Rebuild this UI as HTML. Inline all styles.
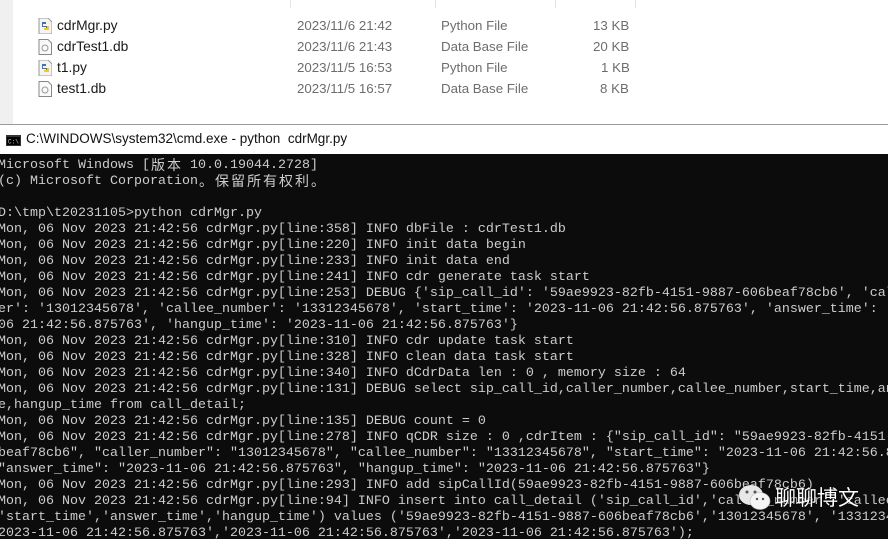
<!DOCTYPE html>
<html><head><meta charset="utf-8"><style>
*{margin:0;padding:0;box-sizing:border-box}
body{width:888px;height:539px;overflow:hidden;background:#fff;position:relative;font-family:"Liberation Sans","Noto Sans CJK SC",sans-serif}
.strip{position:absolute;left:0;top:0;width:13px;height:124px;background:#f0f0f0}
.sep{position:absolute;top:0;width:1px;height:8px;background:#e5e5e5}
.row{position:absolute;left:0;height:20px;font-size:13.8px;color:#1a1a1a;line-height:20px}
.row span{position:absolute;white-space:nowrap}
.g{color:#6d6d6d;font-size:13.3px}
.ic{position:absolute;left:38px;top:2px;width:14px;height:16px}
.title{position:absolute;left:0;top:124px;width:888px;height:30px;border-top:1px solid #9a9a9a;background:#fff}
.title .t{position:absolute;left:26px;top:6px;font-size:13.5px;color:#111}
.con{position:absolute;left:0;top:154px;width:888px;height:385px;background:#0c0c0c;overflow:hidden}
pre{position:absolute;left:-2px;top:4px;font-family:"Liberation Mono","Noto Sans CJK SC",monospace;font-size:13.33px;line-height:16px;color:#cccccc;white-space:pre}
.c{display:inline-block;width:16px;height:16px;line-height:14px;vertical-align:top;overflow:hidden;font-family:"Noto Sans CJK SC",sans-serif;font-size:14px;text-align:center}
.wm{position:absolute;left:775px;top:482px;font-size:21px;color:#fff;font-family:"Noto Sans CJK SC",sans-serif;text-shadow:0 0 2px #000}
</style></head><body>
<div class="strip"></div>
<div class="sep" style="left:290px"></div><div class="sep" style="left:435px"></div><div class="sep" style="left:555px"></div><div class="sep" style="left:635px"></div>

<div class="row" style="top:16px;width:640px">
<svg class="ic" viewBox="0 0 14 16"><path d="M1 0h9l4 4v12H1z" fill="#f4f4f4" stroke="#999"/><path d="M4 4h4v2H5v2h5v3H8V9H4z" fill="#3b74b0"/><path d="M10 12H6v-2h3V8h2v4z" fill="#f3c928"/></svg>
<span style="left:57px">cdrMgr.py</span><span class="g" style="left:297px">2023/11/6 21:42</span><span class="g" style="left:441px">Python File</span><span class="g" style="left:593px">13 KB</span></div>
<div class="row" style="top:37px;width:640px">
<svg class="ic" viewBox="0 0 14 16"><path d="M1 .5h9l3.5 3.5v11.5H1z" fill="#fafafa" stroke="#888"/><circle cx="7" cy="9" r="3" fill="none" stroke="#999"/></svg>
<span style="left:57px">cdrTest1.db</span><span class="g" style="left:297px">2023/11/6 21:43</span><span class="g" style="left:441px">Data Base File</span><span class="g" style="left:593px">20 KB</span></div>
<div class="row" style="top:58px;width:640px">
<svg class="ic" viewBox="0 0 14 16"><path d="M1 0h9l4 4v12H1z" fill="#f4f4f4" stroke="#999"/><path d="M4 4h4v2H5v2h5v3H8V9H4z" fill="#3b74b0"/><path d="M10 12H6v-2h3V8h2v4z" fill="#f3c928"/></svg>
<span style="left:57px">t1.py</span><span class="g" style="left:297px">2023/11/5 16:53</span><span class="g" style="left:441px">Python File</span><span class="g" style="left:601px">1 KB</span></div>
<div class="row" style="top:79px;width:640px">
<svg class="ic" viewBox="0 0 14 16"><path d="M1 .5h9l3.5 3.5v11.5H1z" fill="#fafafa" stroke="#888"/><circle cx="7" cy="9" r="3" fill="none" stroke="#999"/></svg>
<span style="left:57px">test1.db</span><span class="g" style="left:297px">2023/11/5 16:57</span><span class="g" style="left:441px">Data Base File</span><span class="g" style="left:600px">8 KB</span></div>

<div class="title">
<svg style="position:absolute;left:6px;top:10px" width="15" height="11" viewBox="0 0 15 11"><rect width="15" height="11" fill="#333"/><rect x="1" y="2" width="13" height="8" fill="#000"/><text x="2" y="8.5" font-size="6" fill="#ccc" font-family="Liberation Mono">C:\</text></svg>
<div class="t">C:\WINDOWS\system32\cmd.exe - python&nbsp; cdrMgr.py</div></div>

<div class="con"><pre>Microsoft Windows [<span class="c">版</span><span class="c">本</span> 10.0.19044.2728]
(c) Microsoft Corporation<span class="c">。</span><span class="c">保</span><span class="c">留</span><span class="c">所</span><span class="c">有</span><span class="c">权</span><span class="c">利</span><span class="c">。</span>

D:\tmp\t20231105>python cdrMgr.py
Mon, 06 Nov 2023 21:42:56 cdrMgr.py[line:358] INFO dbFile : cdrTest1.db
Mon, 06 Nov 2023 21:42:56 cdrMgr.py[line:220] INFO init data begin
Mon, 06 Nov 2023 21:42:56 cdrMgr.py[line:233] INFO init data end
Mon, 06 Nov 2023 21:42:56 cdrMgr.py[line:241] INFO cdr generate task start
Mon, 06 Nov 2023 21:42:56 cdrMgr.py[line:253] DEBUG {'sip_call_id': '59ae9923-82fb-4151-9887-606beaf78cb6', 'cal
er': '13012345678', 'callee_number': '13312345678', 'start_time': '2023-11-06 21:42:56.875763', 'answer_time': '
06 21:42:56.875763', 'hangup_time': '2023-11-06 21:42:56.875763'}
Mon, 06 Nov 2023 21:42:56 cdrMgr.py[line:310] INFO cdr update task start
Mon, 06 Nov 2023 21:42:56 cdrMgr.py[line:328] INFO clean data task start
Mon, 06 Nov 2023 21:42:56 cdrMgr.py[line:340] INFO dCdrData len : 0 , memory size : 64
Mon, 06 Nov 2023 21:42:56 cdrMgr.py[line:131] DEBUG select sip_call_id,caller_number,callee_number,start_time,an
e,hangup_time from call_detail;
Mon, 06 Nov 2023 21:42:56 cdrMgr.py[line:135] DEBUG count = 0
Mon, 06 Nov 2023 21:42:56 cdrMgr.py[line:278] INFO qCDR size : 0 ,cdrItem : {"sip_call_id": "59ae9923-82fb-4151-
beaf78cb6", "caller_number": "13012345678", "callee_number": "13312345678", "start_time": "2023-11-06 21:42:56.8
"answer_time": "2023-11-06 21:42:56.875763", "hangup_time": "2023-11-06 21:42:56.875763"}
Mon, 06 Nov 2023 21:42:56 cdrMgr.py[line:293] INFO add sipCallId(59ae9923-82fb-4151-9887-606beaf78cb6)
Mon, 06 Nov 2023 21:42:56 cdrMgr.py[line:94] INFO insert into call_detail ('sip_call_id','caller_number','callee
'start_time','answer_time','hangup_time') values ('59ae9923-82fb-4151-9887-606beaf78cb6','13012345678', '1331234
2023-11-06 21:42:56.875763','2023-11-06 21:42:56.875763','2023-11-06 21:42:56.875763');</pre></div>

<svg style="position:absolute;left:738px;top:484px" width="34" height="28" viewBox="0 0 34 28"><ellipse cx="13" cy="11" rx="12" ry="10" fill="#e8e8e8"/><ellipse cx="22" cy="17" rx="10" ry="8.5" fill="#f4f4f4" stroke="#bbb" stroke-width=".6"/><circle cx="9" cy="8" r="1.5" fill="#555"/><circle cx="17" cy="8" r="1.5" fill="#555"/><circle cx="19" cy="15" r="1.2" fill="#555"/><circle cx="25" cy="15" r="1.2" fill="#555"/></svg>
<div class="wm">聊聊博文</div>
</body></html>
